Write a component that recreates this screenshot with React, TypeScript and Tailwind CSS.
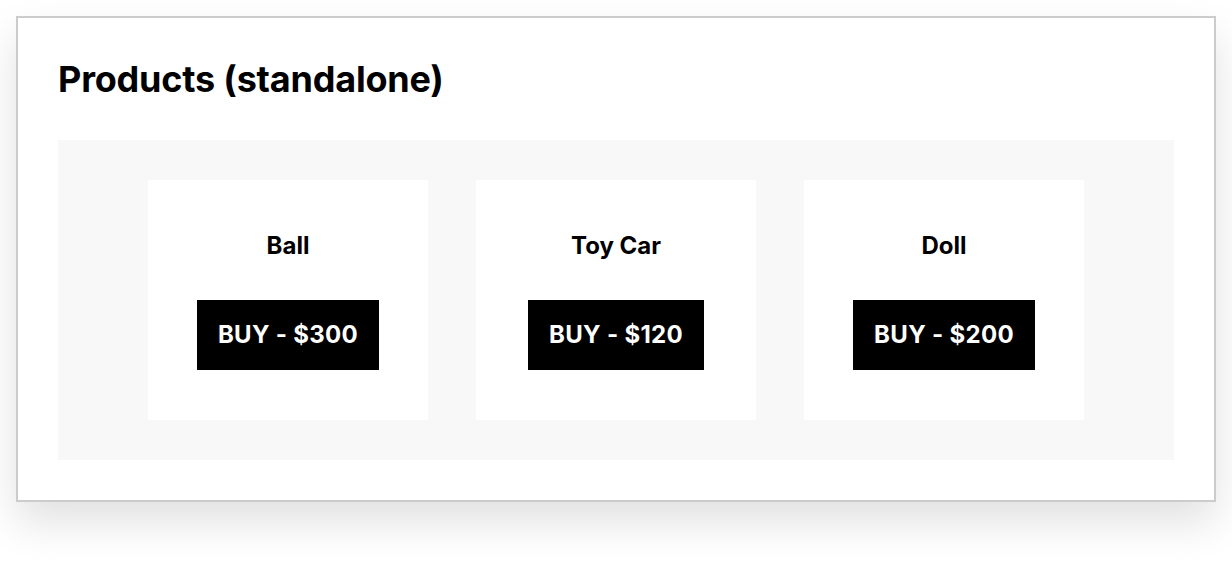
const products = [
  { name: "Ball", price: 300 },
  { name: "Toy Car", price: 120 },
  { name: "Doll", price: 200 },
];

const ProductCard = ({ name, price }: { name: string; price: number }) => (
  <div className="w-[280px] h-[240px] bg-white flex flex-col items-center pt-[50px]">
    <h3 className="text-[24px] leading-[32px] font-bold">{name}</h3>
    <button className="mt-[38px] h-[70px] px-[21px] bg-black text-white text-[24px] font-bold tracking-[0.3px]">
      BUY - ${price}
    </button>
  </div>
);

export default function App() {
  return (
    <div className="min-h-screen bg-white p-4 font-['Inter',sans-serif] text-black">
      <div className="w-[1200px] border-2 border-[#cccccc] bg-white p-10 shadow-[0_20px_40px_rgba(0,0,0,0.12)]">
        <h1 className="text-[36px] leading-[42px] font-bold tracking-[-0.2px] mb-10">Products (standalone)</h1>
        <div className="h-[320px] bg-[#f8f8f8] pt-10 flex justify-center gap-12">
          {products.map((p) => (
            <ProductCard key={p.name} name={p.name} price={p.price} />
          ))}
        </div>
      </div>
    </div>
  );
}
